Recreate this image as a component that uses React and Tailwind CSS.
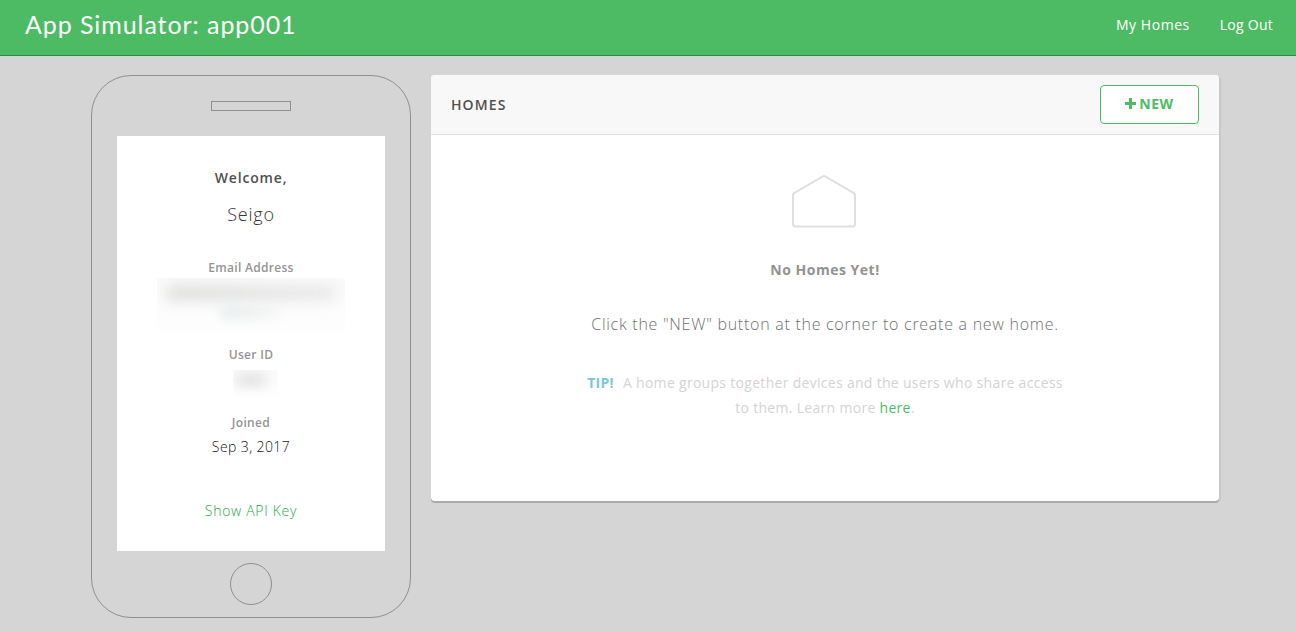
function Header() {
  return (
    <header className="flex h-14 items-start justify-between border-b border-[#2f8a47] bg-[#4dbb63] pl-[25px] pr-[23px] text-white">
      <h1 className="mt-2 whitespace-nowrap font-['Lato',sans-serif] text-[25px] leading-8 tracking-[0.92px]">
        App Simulator: app001
      </h1>
      <nav className="mt-[15px] flex gap-[30px] text-sm leading-5">
        <a className="whitespace-nowrap tracking-[0.55px]">My Homes</a>
        <a className="whitespace-nowrap tracking-[0.25px]">Log Out</a>
      </nav>
    </header>
  );
}

function Phone() {
  return (
    <aside className="flex h-[543px] w-80 shrink-0 flex-col items-center rounded-[40px] border border-[#8f8f8f]">
      <div className="mt-[25px] h-2.5 w-20 border border-[#8f8f8f]" />
      <div className="mt-[25px] flex h-[415px] w-[268px] flex-col items-center bg-white text-center">
        <p className="mt-8 text-sm font-semibold leading-5 tracking-[0.85px] text-[#4f4f4f]">Welcome,</p>
        <p className="mt-3.5 text-[18px] font-light leading-6 tracking-[0.8px] text-[#333]">Seigo</p>
        <p className="mt-8 text-xs font-semibold leading-5 tracking-[0.3px] text-[#949494]">Email Address</p>
        <div className="h-[54px] w-[188px] overflow-hidden bg-gradient-to-b from-[#fafafa] to-[#fefefe] pt-2">
          <div className="ml-2.5 h-3.5 w-[168px] bg-gradient-to-r from-[#dcdcdb] to-[#e8e8e8] blur-[7px]" />
          <div className="ml-16 mt-1.5 h-3 w-14 bg-gradient-to-r from-[#e4eaea] to-[#f3f3f3] blur-[6px]" />
        </div>
        <p className="mt-[13px] text-xs font-semibold leading-5 tracking-[0.3px] text-[#949494]">User ID</p>
        <div className="ml-[9px] mt-[5px] h-[27px] w-[45px] overflow-hidden bg-gradient-to-b from-[#fafafa] to-[#fefefe] pl-1 pt-1">
          <div className="h-3 w-7 bg-[#e0e0e0] blur-[6px]" />
        </div>
        <p className="mt-4 text-xs font-semibold leading-5 tracking-[0.35px] text-[#949494]">Joined</p>
        <p className="mt-1 text-sm font-light leading-5 tracking-[0.4px] text-[#111]">Sep 3, 2017</p>
        <a className="mt-11 text-sm font-light leading-5 tracking-[0.7px] text-[#28a848]">Show API Key</a>
      </div>
      <div className="mt-3 size-[42px] rounded-full border border-[#8f8f8f]" />
    </aside>
  );
}

function HomeIcon() {
  return (
    <svg className="mr-0.5 mt-10 h-[54px] w-16" viewBox="0 0 64 54" fill="none" stroke="#dfdfdf" strokeWidth="2" strokeLinejoin="round">
      <path d="M1 20Q1 18.8 2.1 18.1L30.5 1.5Q32 .6 33.5 1.5L61.9 18.1Q63 18.8 63 20V49Q63 51.5 60.5 51.5H4Q1 51.5 1 49Z" />
    </svg>
  );
}

function HomesCard() {
  return (
    <section className="flex h-[426px] w-[788px] shrink-0 flex-col rounded bg-white shadow-[0_2px_0_#aaaaaa,2px_1px_1px_#c8c8c8]">
      <div className="flex h-[60px] items-center justify-between rounded-t border-b border-[#e2e2e2] bg-[#f8f8f8] px-5">
        <h2 className="text-sm font-semibold tracking-[1.1px] text-[#505050]">HOMES</h2>
        <button className="flex h-[39px] w-[99px] items-center justify-center gap-[3px] rounded border border-[#4dbb63] bg-white pb-0.5 text-sm font-bold tracking-[0.5px] text-[#4dbb63]">
          <svg className="size-[11px]" viewBox="0 0 11 11" fill="currentColor">
            <path d="M4 0h3v4h4v3H7v4H4V7H0V4h4z" />
          </svg>
          <span>NEW</span>
        </button>
      </div>
      <div className="flex flex-col items-center text-center">
        <HomeIcon />
        <h3 className="mt-[31px] text-sm font-bold leading-5 tracking-[0.5px] text-[#929292]">No Homes Yet!</h3>
        <p className="mt-8 whitespace-nowrap text-base font-light leading-6 tracking-[0.73px] text-[#707070]">
          Click the "NEW" button at the corner to create a new home.
        </p>
        <p className="mt-[34px] whitespace-nowrap text-sm leading-[25px] tracking-[0.3px] text-[#d3d3d3]">
          <strong className="mr-[9px] font-bold text-[#7bc8d2]">TIP!</strong>
          A home groups together devices and the users who share access
          <br />
          to them. Learn more <a className="text-[#4dbb63]">here</a>.
        </p>
      </div>
    </section>
  );
}

export default function App() {
  return (
    <div className="h-[632px] w-[1296px] overflow-hidden bg-[#d5d5d5] font-['Open_Sans',sans-serif]">
      <Header />
      <main className="flex items-start gap-5 pl-[91px] pt-[19px]">
        <Phone />
        <HomesCard />
      </main>
    </div>
  );
}
